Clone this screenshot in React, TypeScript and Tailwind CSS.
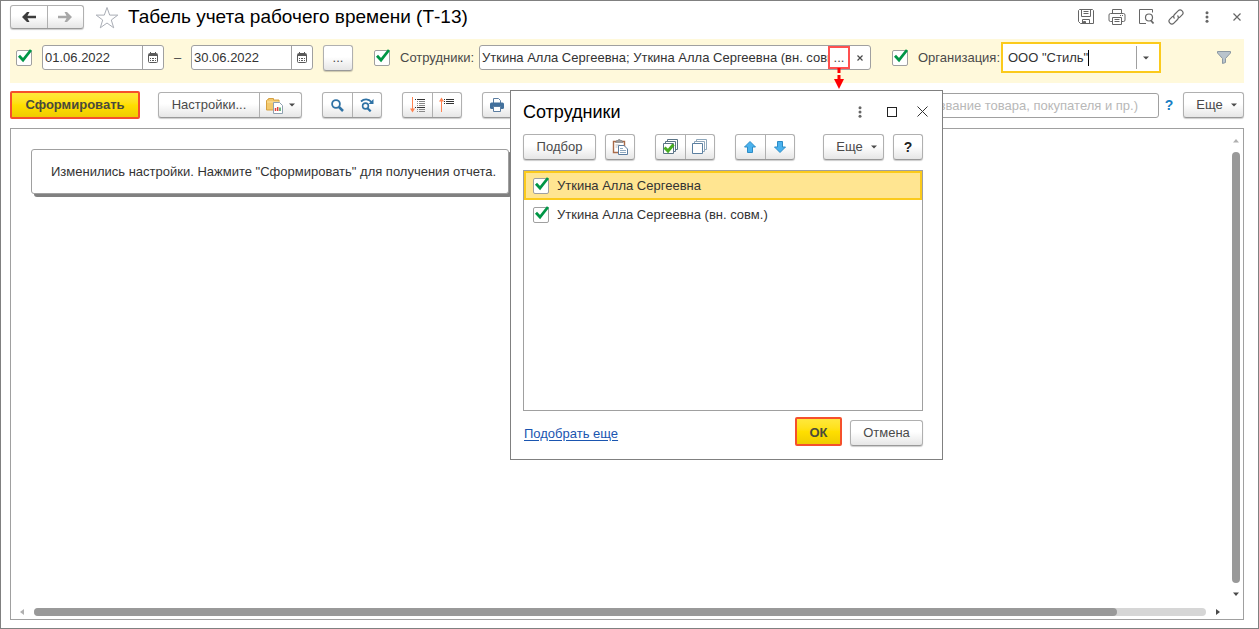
import React, { useState } from "react";
import { clsx } from "clsx";

const FACE = "border border-[#b0b0b0] border-b-[#999] bg-linear-to-b from-white from-45% to-[#e6e6e6] shadow-[0_1px_1px_#00000033]";

function Btn({ className, children, ...rest }: React.ButtonHTMLAttributes<HTMLButtonElement>) {
  return (
    <button
      type="button"
      className={clsx("flex h-[26px] shrink-0 items-center justify-center rounded-[3px] text-[#4a4a4a]", FACE, className)}
      {...rest}
    >
      {children}
    </button>
  );
}

function Group({ className, children }: { className?: string; children: React.ReactNode }) {
  return (
    <div className={clsx("flex shrink-0 divide-x divide-[#b0b0b0] rounded-[3px]", FACE, className)}>
      {children}
    </div>
  );
}

function Seg({ label, className, children }: { label: string; className?: string; children: React.ReactNode }) {
  return (
    <button type="button" aria-label={label} className={clsx("flex flex-1 items-center justify-center", className)}>
      {children}
    </button>
  );
}

function Check({ label, id }: { label: string; id?: string }) {
  const [on, setOn] = useState(true);
  return (
    <span className="grid size-4 shrink-0">
      <input
        id={id}
        type="checkbox"
        aria-label={label}
        checked={on}
        onChange={(e) => setOn(e.target.checked)}
        className="col-start-1 row-start-1 size-4 appearance-none rounded-[2px] border border-[#a0a0a0] bg-white"
      />
      {on && (
        <svg viewBox="0 0 16 16" className="pointer-events-none col-start-1 row-start-1 size-4 overflow-visible" fill="none">
          <path d="M3 5.8 L7 10 L15 0" stroke="#009646" strokeWidth="2.8" />
        </svg>
      )}
    </span>
  );
}

function Caret({ className }: { className?: string }) {
  return (
    <svg viewBox="0 0 6 4" className={clsx("h-1 w-1.5 shrink-0", className)}>
      <path d="M0 0.5h6L3 3.5z" fill="#4a4a4a" />
    </svg>
  );
}

function Dots({ className }: { className?: string }) {
  return (
    <svg viewBox="0 0 4 12" className={clsx("h-3 w-1", className)} fill="#666">
      <circle cx="2" cy="1.8" r="1.5" />
      <circle cx="2" cy="6" r="1.5" />
      <circle cx="2" cy="10.2" r="1.5" />
    </svg>
  );
}

function CalendarIcon() {
  return (
    <svg viewBox="0 0 10 11" className="h-[11px] w-[10px]" fill="none">
      <rect x="0.5" y="1.5" width="9" height="9" rx="1" stroke="#5a5a5a" />
      <path d="M1 2.5h8M1 3.5h8" stroke="#5a5a5a" />
      <path d="M2.5 0v2M7.5 0v2" stroke="#5a5a5a" />
      <path d="M2 6.5h1M4 6.5h2M7 6.5h1M2 8.5h1M4 8.5h2M7 8.5h1" stroke="#5a5a5a" />
    </svg>
  );
}

function DateField({ label, initial }: { label: string; initial: string }) {
  return (
    <div className="flex h-[25px] w-[122px] shrink-0 rounded-[3px] border border-[#a0a0a0] bg-white">
      <input aria-label={label} defaultValue={initial} className="w-0 flex-1 pl-0.5 text-[#333] outline-none" />
      <button type="button" aria-label="Календарь" className="flex w-[21px] items-center justify-center border-l border-[#a0a0a0]">
        <CalendarIcon />
      </button>
    </div>
  );
}

function NavArrow({ flip, color }: { flip?: boolean; color: string }) {
  return (
    <svg viewBox="0 0 14 10" className={clsx("h-2.5 w-3.5", flip && "rotate-180")} fill={color}>
      <path d="M0 5L5 0H7.500L5.500 3.800H14V6.200H5.500L7.500 10H5z" />
    </svg>
  );
}

function TitleBar() {
  return (
    <header className="flex h-[38px] items-center pb-1.5">
      <Group className="h-6 w-[74px]">
        <Seg label="Назад"><NavArrow color="#3c3c3c" /></Seg>
        <Seg label="Вперед"><NavArrow flip color="#a8a8a8" /></Seg>
      </Group>
      <button type="button" aria-label="В избранное" className="ml-[11px]">
        <svg viewBox="0 0 24 23" className="h-[23px] w-6" fill="none" stroke="#a9adb5">
          <path d="M12 1.5l2.7 7.6h8.1l-6.5 4.9 2.4 7.8-6.7-4.8-6.7 4.8 2.4-7.8L1.2 9.1h8.1z" />
        </svg>
      </button>
      <h1 className="ml-[9px] text-[19px] leading-6 text-black">Табель учета рабочего времени (Т-13)</h1>
      <div className="ml-auto flex items-center text-[#666]">
        <button type="button" aria-label="Сохранить" className="mr-[14px]">
          <svg viewBox="0 0 16 16" className="size-4" fill="none" stroke="#666">
            <path d="M1.500 0.500h13l1 1v13h-13l-2-2v-11z" />
            <path d="M3.500 0.500v7h9v-7M5.500 2.500h5M5.500 4.500h5M4.500 14.500v-4h7v4" />
            <path d="M5.500 12.500h2v2h-2z" fill="#666" />
          </svg>
        </button>
        <button type="button" aria-label="Печать" className="mr-3">
          <svg viewBox="0 0 18 16" className="h-4 w-[18px]" fill="none" stroke="#666">
            <path d="M4.500 4.500v-4h9v4M4.500 12.500h-2a1.500 1.500 0 0 1-1.500-1.500v-5a1.500 1.500 0 0 1 1.500-1.500h13a1.500 1.500 0 0 1 1.500 1.500v5a1.500 1.500 0 0 1-1.500 1.500h-2" />
            <path d="M4.500 8.500h9v7h-9zM6.500 10.500h5M6.500 12.500h5M12 6.500h1M14 6.500h1" />
          </svg>
        </button>
        <button type="button" aria-label="Просмотр" className="mr-[13px]">
          <svg viewBox="0 0 17 16" className="h-4 w-[17px]" fill="none" stroke="#666">
            <path d="M8 14.500H1.500v-14h13v3" />
            <circle cx="11" cy="8.500" r="3.500" strokeWidth="1.200" />
            <path d="M12.800 11.200l2.700 3.300" strokeWidth="1.800" />
          </svg>
        </button>
        <button type="button" aria-label="Ссылка" className="mr-[21px]">
          <svg viewBox="0 0 16 16" className="size-4" fill="none" stroke="#666" strokeWidth="1.200">
            <path d="M6.500 9.500a3 3 0 0 1 0-4l3.600-3.600a2.700 2.700 0 0 1 4 4l-3 3" />
            <path d="M9.500 6.500a3 3 0 0 1 0 4l-3.600 3.600a2.700 2.700 0 0 1-4-4l3-3" />
          </svg>
        </button>
        <button type="button" aria-label="Меню" className="mr-6"><Dots /></button>
        <button type="button" aria-label="Закрыть" className="mr-[3px]">
          <svg viewBox="0 0 8 8" className="size-2" stroke="#666" strokeWidth="1.200"><path d="M0.500 0.500l7 7M7.500 0.500l-7 7" /></svg>
        </button>
      </div>
    </header>
  );
}

function FilterBar() {
  return (
    <div className="flex h-11 items-center bg-[#fff9db] pb-[7px] pl-1.5">
      <Check label="Период" />
      <div className="ml-2.5 flex items-center">
        <DateField label="Начало периода" initial="01.06.2022" />
        <span className="w-[27px] text-center text-[#4a4a4a]">–</span>
        <DateField label="Конец периода" initial="30.06.2022" />
      </div>
      <Btn aria-label="Выбрать период" className="mr-[21px] ml-2.5 w-[30px]">...</Btn>
      <Check id="use-staff" label="Сотрудники" />
      <label htmlFor="staff" className="ml-2.5 w-[79px] shrink-0 whitespace-nowrap text-[#4a4a4a]">Сотрудники:</label>
      <div className="flex h-[25px] w-[392px] shrink-0 rounded-[3px] border border-[#a0a0a0] bg-white">
        <input
          id="staff"
          defaultValue="Уткина Алла Сергеевна; Уткина Алла Сергеевна (вн. совм.)"
          className="w-0 flex-1 pl-0.5 text-[#333] outline-none"
        />
        <button type="button" aria-label="Выбрать сотрудников" className="relative flex w-[22px] items-center justify-center border-2 border-[#ff5050] text-[#4a4a4a]">
          ...
          <svg viewBox="0 0 10 22" className="pointer-events-none absolute top-full left-1 z-10 h-[22px] w-2.5">
            <path d="M5 1v5M5 8v5" stroke="#f00" strokeWidth="3" />
            <path d="M0 12h10l-5 10z" fill="#f00" />
          </svg>
        </button>
        <button type="button" aria-label="Очистить" className="flex w-5 items-center justify-center">
          <svg viewBox="0 0 6 6" className="size-1.5" stroke="#4a4a4a" strokeWidth="1.200"><path d="M0.500 0.500l5 5M5.500 0.500l-5 5" /></svg>
        </button>
      </div>
      <div className="ml-[21px] flex"><Check id="use-org" label="Организация" /></div>
      <label htmlFor="org" className="ml-2.5 w-[83px] shrink-0 whitespace-nowrap text-[#4a4a4a]">Организация:</label>
      <div className="flex h-[31px] w-40 shrink-0 items-center border-2 border-[#fbca1c] bg-white">
        <input id="org" defaultValue={'ООО "Стиль"'} className="field-sizing-content pl-[5px] text-[#333] outline-none" />
        <span className="h-4 w-px bg-black" />
        <button type="button" aria-label="Список организаций" className="ml-auto flex h-[23px] w-[23px] items-center justify-center border-l border-[#a0a0a0] pr-1">
          <Caret />
        </button>
      </div>
      <button type="button" aria-label="Фильтр" className="mr-[13px] ml-auto">
        <svg viewBox="0 0 14 13" className="h-[13px] w-3.5">
          <path d="M0.500 0.500h13v1.500L8.500 7.500v4l-3 1v-5L0.500 2z" fill="#b9c4cc" stroke="#8b98a2" />
        </svg>
      </button>
    </div>
  );
}

function Toolbar() {
  return (
    <div className="flex items-center pt-2 pb-[9px]">
      <button
        type="button"
        className="h-7 w-[130px] rounded-[2px] border-2 border-[#f5502c] bg-linear-to-b from-[#ffe83a] via-[#ffdf00] to-[#efcc00] font-bold text-[#4a4a3c]"
      >
        Сформировать
      </button>
      <Group className="ml-[18px] h-[26px] w-36">
        <Seg label="Настройки" className="text-[#4a4a4a]">Настройки...</Seg>
        <button type="button" aria-label="Варианты отчета" className="flex w-[41px] items-center justify-center gap-1.5">
          <svg viewBox="0 0 17 17" className="size-[17px]">
            <path d="M0.500 13V3.500l1-1h1V1.500h5v1.500h5.500V13z" fill="#f3c96c" stroke="#d6a040" />
            <path d="M1 5h12" stroke="#fbe3a6" />
            <path d="M7.500 5.500h6l3 3v8h-9z" fill="#fff" stroke="#8fa0b0" />
            <path d="M9.500 14v-3" stroke="#e2403a" strokeWidth="1.500" />
            <path d="M11.700 14v-4" stroke="#e2403a" strokeWidth="1.500" />
            <path d="M14 14v-3.500" stroke="#3aa15a" strokeWidth="1.500" />
          </svg>
          <Caret />
        </button>
      </Group>
      <Group className="ml-5 h-[26px] w-[60px]">
        <Seg label="Найти">
          <svg viewBox="0 0 13 13" className="size-[13px]" fill="none" stroke="#2f72a5">
            <circle cx="5" cy="5" r="3.900" strokeWidth="1.800" />
            <path d="M8 8l4 4" strokeWidth="2.500" />
          </svg>
        </Seg>
        <Seg label="Найти далее">
          <svg viewBox="0 0 14 14" className="size-3.5" fill="none" stroke="#2f72a5">
            <circle cx="5.500" cy="8" r="2.900" strokeWidth="1.600" />
            <path d="M7.500 10.200l3.200 3.200" strokeWidth="2.200" />
            <path d="M1 3.500C4 0.500 8.500 0.500 11.500 4" strokeWidth="1.800" />
            <path d="M13.500 1v5H8.500z" fill="#2f72a5" stroke="none" />
          </svg>
        </Seg>
      </Group>
      <Group className="ml-5 h-[26px] w-[60px]">
        <Seg label="Развернуть группы">
          <svg viewBox="0 0 15 16" className="h-4 w-[15px]" fill="none">
            <path d="M2.500 0v14" stroke="#ff8352" />
            <path d="M0 11.500h5l-2.500 4z" fill="#ff8352" />
            <path d="M5 2.500h1M7 2.500h8M5 10.500h1M7 10.500h8" stroke="#333" />
            <path d="M7 4.500h1M9 4.500h6M7 6.500h1M9 6.500h6M7 8.500h1M9 8.500h6M7 12.500h1M9 12.500h6M7 14.500h1M9 14.500h6" stroke="#888" />
          </svg>
        </Seg>
        <Seg label="Свернуть группы">
          <svg viewBox="0 0 15 16" className="h-4 w-[15px]" fill="none">
            <path d="M2.500 15V2" stroke="#ff8352" />
            <path d="M0 4.500h5L2.500 0.500z" fill="#ff8352" />
            <path d="M5 2.500h1M7 2.500h8M5 4.500h1M7 4.500h8M5 6.500h1M7 6.500h8" stroke="#333" />
          </svg>
        </Seg>
      </Group>
      <Group className="ml-5 h-[26px] w-[60px]">
        <Seg label="Печать">
          <svg viewBox="0 0 14 14" className="size-3.5">
            <path d="M3.500 5V0.500h5l2 2V5" fill="#fff" stroke="#5b7da0" />
            <rect x="0" y="4.500" width="14" height="6.500" rx="1.500" fill="#42709c" />
            <path d="M3.500 8.500h7v5h-7z" fill="#fff" stroke="#5b7da0" />
          </svg>
        </Seg>
        <Seg label="Просмотр">
          <svg viewBox="0 0 14 14" className="size-3.5" fill="#fff" stroke="#5b7da0"><path d="M2.500 0.500h6l3 3v10h-9z" /></svg>
        </Seg>
      </Group>
      <input
        aria-label="Поиск"
        placeholder="Введите слово для фильтра (название товара, покупателя и пр.)"
        className="ml-auto h-[25px] w-[440px] rounded-[3px] border border-[#a0a0a0] bg-white pr-5 pl-1 text-right text-[#333] outline-none placeholder:text-[#b8b8b8]"
      />
      <button type="button" aria-label="Справка" className="w-6 pr-1 text-center text-[14px] font-bold text-[#1a7fc4]">?</button>
      <Btn className="w-[61px] gap-2 pl-1.5">Еще <Caret /></Btn>
    </div>
  );
}

function Report() {
  return (
    <main className="flex flex-1 flex-col border border-[#a0a0a0]">
      <div className="flex flex-1">
        <div className="flex-1 px-5 pt-5">
          <p className="w-fit rounded-[3px] border border-[#a0a0a0] bg-white py-[11px] pr-3 pl-[19px] leading-[21px] whitespace-nowrap text-[#333] shadow-[3px_3px_0_#808080]">
            Изменились настройки. Нажмите "Сформировать" для получения отчета.
          </p>
        </div>
        <div className="flex w-3.5 flex-col items-center pt-2.5">
          <svg viewBox="0 0 6 4" className="h-1 w-1.5"><path d="M0 3.500h6L3 0z" fill="#b0b0b0" /></svg>
          <div className="mt-[9px] w-2 flex-1 rounded-full bg-[#999]" />
          <svg viewBox="0 0 6 4" className="mt-[9px] mb-[3px] h-1 w-1.5"><path d="M0 0.500h6L3 4z" fill="#4a4a4a" /></svg>
        </div>
      </div>
      <div className="flex h-5 items-center pt-1.5 pr-[23px] pl-[9px]">
        <svg viewBox="0 0 4 6" className="h-1.5 w-1"><path d="M4 0v6L0 3z" fill="#b0b0b0" /></svg>
        <div className="mx-2.5 h-2 flex-1 rounded-full bg-[#d6d6d6]">
          <div className="h-2 w-[92.4%] rounded-full bg-[#999]" />
        </div>
        <svg viewBox="0 0 4 6" className="h-1.5 w-1"><path d="M0 0v6l4-3z" fill="#4a4a4a" /></svg>
      </div>
    </main>
  );
}

const EMPLOYEES = ["Уткина Алла Сергеевна", "Уткина Алла Сергеевна (вн. совм.)"];

function StaffDialog() {
  const [selected, setSelected] = useState(0);
  return (
    <section
      role="dialog"
      aria-labelledby="dlg-title"
      className="absolute top-[89px] left-[509px] flex h-[370px] w-[433px] flex-col border border-[#808080] bg-white px-3"
    >
      <div className="flex h-[43px] shrink-0 items-center pr-px pb-0.5">
        <h2 id="dlg-title" className="text-[18px] leading-6 text-black">Сотрудники</h2>
        <button type="button" aria-label="Меню" className="mr-[25px] ml-auto"><Dots /></button>
        <button type="button" aria-label="Развернуть" className="mr-5 size-[10px] border border-[#222]" />
        <button type="button" aria-label="Закрыть" className="mr-px">
          <svg viewBox="0 0 11 11" className="size-[11px]" stroke="#333"><path d="M0.500 0.500l10 10M10.500 0.500l-10 10" /></svg>
        </button>
      </div>
      <div className="flex pr-[7px]">
        <Btn className="w-[73px]">Подбор</Btn>
        <Btn aria-label="Вставить" className="ml-[9px] w-[30px]">
          <svg viewBox="0 0 16 16" className="size-4">
            <path d="M1.500 2.500h11v11h-11z" fill="#fff" stroke="#a86a48" strokeWidth="1.400" />
            <path d="M3.500 3.500l1-2h1.500l0.500-1h1.500l0.500 1H10l1 2z" fill="#9a9a9a" stroke="#777" strokeWidth="0.500" />
            <path d="M3.500 6h4M3.500 8h2" stroke="#bbb" />
            <path d="M6.500 6.500h5.500l3.500 3.500v5.500h-9z" fill="#fff" stroke="#5b7da0" />
            <path d="M8 9.500h3M8 11.500h6M8 13.500h6" stroke="#8fa9c0" />
          </svg>
        </Btn>
        <Group className="ml-5 w-[60px]">
          <Seg label="Установить флажки">
            <svg viewBox="0 0 17 16" className="h-4 w-[17px]" fill="#fff" stroke="#5b7486">
              <path d="M5.500 0.500h10v10h-10z" />
              <path d="M3.500 2.500h10v10h-10z" />
              <path d="M1.500 4.500h10v10h-10z" />
              <path d="M2.500 8.500l3.500 3.500L11.500 5.500" fill="none" stroke="#48ad22" strokeWidth="3" />
            </svg>
          </Seg>
          <Seg label="Снять флажки">
            <svg viewBox="0 0 17 16" className="h-4 w-[17px]" fill="#fff" stroke="#5b7fa0">
              <path d="M5.500 0.500h10v10h-10z" stroke="#8ea7bb" />
              <path d="M3.500 2.500h10v10h-10z" stroke="#8ea7bb" />
              <path d="M1.500 4.500h10v10h-10z" />
            </svg>
          </Seg>
        </Group>
        <Group className="ml-5 w-[60px]">
          <Seg label="Вверх">
            <svg viewBox="0 0 12 12" className="size-3"><path d="M6 0.500L11.500 6H8.500v5.500h-5V6H0.500z" fill="#4ab2ee" stroke="#2c8cc6" /></svg>
          </Seg>
          <Seg label="Вниз">
            <svg viewBox="0 0 12 12" className="size-3"><path d="M6 11.500L0.500 6h3V0.500h5V6h3z" fill="#4ab2ee" stroke="#2c8cc6" /></svg>
          </Seg>
        </Group>
        <Btn className="ml-auto w-[61px] gap-2 pl-1.5">Еще <Caret /></Btn>
        <Btn aria-label="Справка" className="ml-[9px] w-[30px] text-[14px] font-bold text-[#222]">?</Btn>
      </div>
      <ul className="mt-2.5 mr-[7px] flex-1 border border-[#a0a0a0]">
        {EMPLOYEES.map((name, i) => (
          <li
            key={name}
            onClick={() => setSelected(i)}
            className={clsx(
              "flex h-[29px] items-center gap-2 border-2 pl-[7px] text-[#333]",
              i === selected ? "border-[#fbca1c] bg-[#ffe591]" : "border-transparent",
            )}
          >
            <Check label={name} />
            {name}
          </li>
        ))}
      </ul>
      <div className="flex h-12 shrink-0 items-start pt-[6px] pr-[7px]">
        <a href="#more" className="mt-[9px] ml-px leading-4 text-[#1a55b0] underline underline-offset-2">Подобрать еще</a>
        <button
          type="button"
          className="ml-auto h-[29px] w-[47px] rounded-[2px] border-2 border-[#f5502c] bg-linear-to-b from-[#ffe83a] via-[#ffdf00] to-[#efcc00] pt-0.5 font-bold text-[#4a4a3c]"
        >
          ОК
        </button>
        <Btn className="mt-[3px] ml-2 w-[73px]">Отмена</Btn>
      </div>
    </section>
  );
}

export default function App() {
  return (
    <div className="relative flex min-h-screen flex-col border border-[#808080] bg-white pr-3.5 pb-2 pl-[9px] font-['Liberation_Sans',Arial,sans-serif] text-[13px] leading-4">
      <TitleBar />
      <FilterBar />
      <Toolbar />
      <Report />
      <StaffDialog />
    </div>
  );
}
